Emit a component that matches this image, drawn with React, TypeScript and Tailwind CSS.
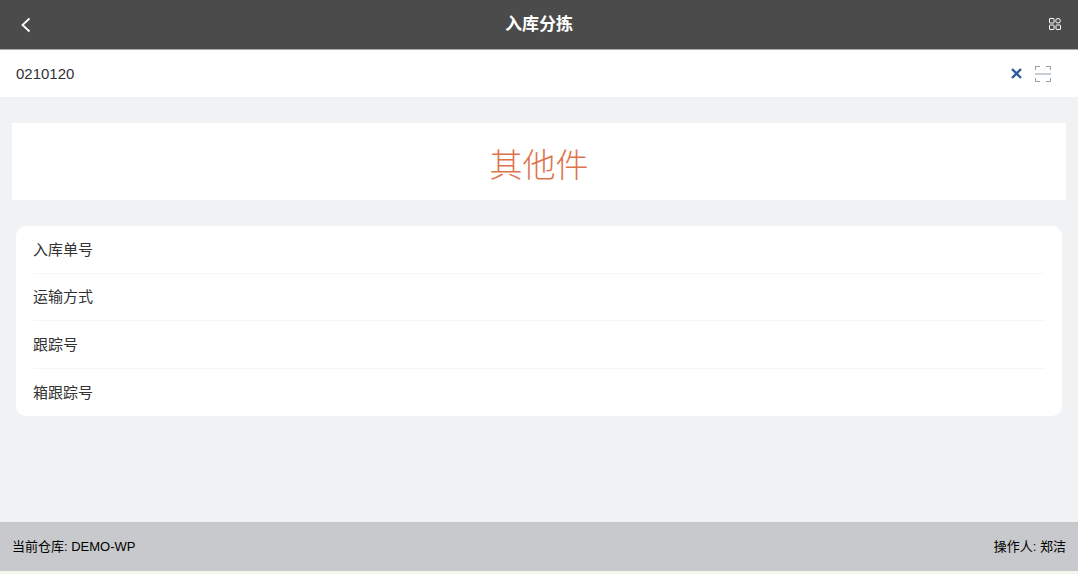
const fields = ["入库单号", "运输方式", "跟踪号", "箱跟踪号"];

const font = "font-['Liberation_Sans','Noto_Sans_CJK_SC',sans-serif]";

export default function App() {
  return (
    <div className={`flex h-[574px] w-[1078px] flex-col overflow-hidden bg-[#f1f2f4] ${font}`}>
      <header className="relative flex h-[50px] shrink-0 items-center justify-between border-b border-b-[#a8a8a8] bg-[#4b4b4b] pl-5 pr-[17px]">
        <svg width="11" height="16" viewBox="0 0 11 16" fill="none" stroke="#ffffff" strokeWidth="1.8">
          <path d="M9.5 1.5 2.5 8 9.5 14.5" />
        </svg>
        <h1 className="absolute inset-x-0 pt-px text-center text-[17px] font-bold text-white">入库分拣</h1>
        <svg className="mb-[2px]" width="12" height="12" viewBox="0 0 12 12" fill="none" stroke="#ffffff" strokeWidth="1">
          <rect x="0.5" y="0.5" width="4.5" height="4.5" rx="0.5" />
          <circle cx="9" cy="2.8" r="2.3" />
          <rect x="0.5" y="7" width="4.5" height="4.5" rx="0.5" />
          <rect x="7" y="7" width="4.5" height="4.5" rx="0.5" />
        </svg>
      </header>

      <div className="flex h-[47px] shrink-0 items-center justify-between bg-white pl-4 pr-[27px]">
        <span className="pt-px text-[15px] text-[#323233]">0210120</span>
        <div className="flex items-center gap-[13px]">
          <svg width="11" height="11" viewBox="0 0 11 11" fill="none" stroke="#2f5a9c" strokeWidth="2.4">
            <path d="M1 1 10 10M10 1 1 10" />
          </svg>
          <svg width="16" height="16" viewBox="0 0 16 16" fill="none" stroke="#8f9db0" strokeWidth="1">
            <path d="M0.5 4V0.5H5M11 0.5H15.5V4M0.5 12V15.5H5M11 15.5H15.5V12M0 8H16" />
          </svg>
        </div>
      </div>

      <div className="mx-3 mt-[26px] flex h-[77px] shrink-0 items-center justify-center bg-white pt-2 text-[33px] font-light text-[#de744c]">
        其他件
      </div>

      <div className="mx-4 mt-[26px] shrink-0 rounded-[10px] bg-white px-[17px]">
        {fields.map((field, i) => (
          <div
            key={field}
            className={`flex h-[47.5px] items-center pt-px text-[15px] text-[#323233] ${i < fields.length - 1 ? "border-b border-b-[#f5f6f7]" : ""}`}
          >
            {field}
          </div>
        ))}
      </div>

      <div className="flex-1" />

      <footer className="flex h-[49px] shrink-0 items-center justify-between bg-[#c8c9cc] px-3 text-[13px] text-black">
        <span>当前仓库: DEMO-WP</span>
        <span>操作人: 郑洁</span>
      </footer>
      <div className="h-[3px] shrink-0 bg-[#f4f8ec]" />
    </div>
  );
}
